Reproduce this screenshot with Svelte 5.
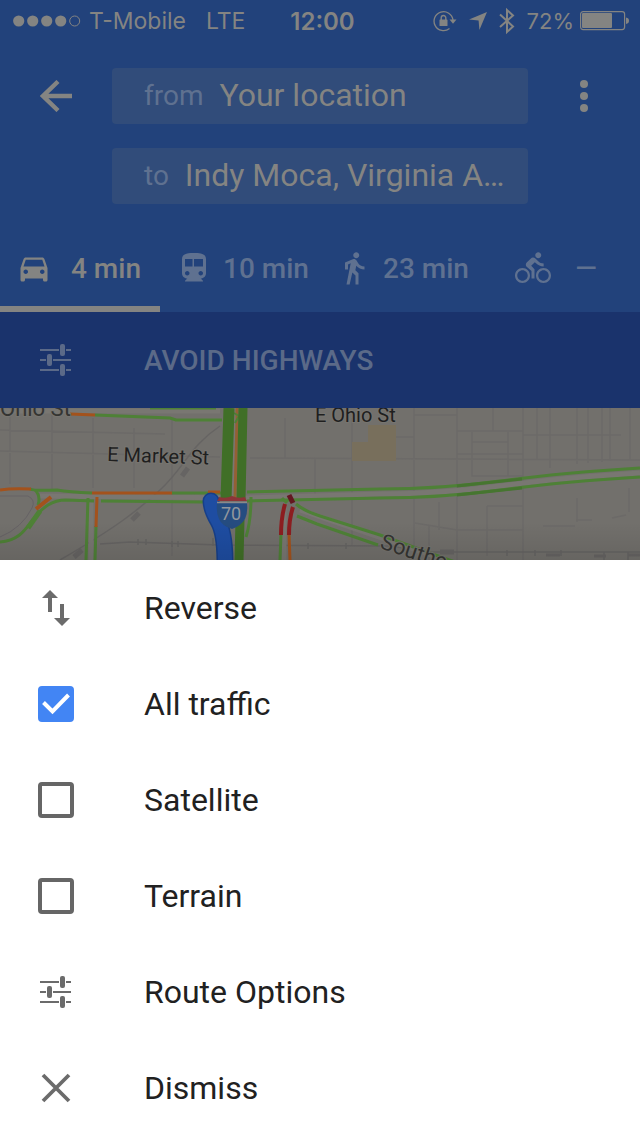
<script>
  let layers = $state([
    { id: 'traffic', label: 'All traffic', on: true },
    { id: 'satellite', label: 'Satellite', on: false },
    { id: 'terrain', label: 'Terrain', on: false }
  ]);

  const modes = [
    { icon: 'car', name: 'Driving', time: '4 min' },
    { icon: 'train', name: 'Transit', time: '10 min' },
    { icon: 'walk', name: 'Walking', time: '23 min' },
    { icon: 'bike', name: 'Cycling', time: '—' }
  ];
  let active = $state('car');

  const paths = {
    car: 'M18.92 6.01C18.72 5.42 18.16 5 17.5 5h-11c-.66 0-1.21.42-1.42 1.01L3 12v8c0 .55.45 1 1 1h1c.55 0 1-.45 1-1v-1h12v1c0 .55.45 1 1 1h1c.55 0 1-.45 1-1v-8l-2.08-5.99zM6.5 16c-.83 0-1.5-.67-1.5-1.5S5.67 13 6.5 13s1.5.67 1.5 1.5S7.33 16 6.5 16zm11 0c-.83 0-1.5-.67-1.5-1.5s.67-1.5 1.5-1.5 1.5.67 1.5 1.5-.67 1.5-1.5 1.5zM5 11l1.5-4.5h11L19 11H5z',
    train: 'M12 2c-4.42 0-8 .5-8 4v9.5C4 17.43 5.57 19 7.5 19L6 20.5v.5h12v-.5L16.5 19c1.93 0 3.5-1.57 3.5-3.5V6c0-3.5-3.58-4-8-4zM7.5 17c-.83 0-1.5-.67-1.5-1.5S6.67 14 7.5 14s1.5.67 1.5 1.5S8.33 17 7.5 17zm3.5-6H6V6h5v5zm1 0V6h6v5h-6zm4.5 6c-.83 0-1.5-.67-1.5-1.5s.67-1.5 1.5-1.5 1.5.67 1.5 1.5-.67 1.5-1.5 1.5z',
    walk: 'M13.5 5.5c1.1 0 2-.9 2-2s-.9-2-2-2-2 .9-2 2 .9 2 2 2zM9.8 8.9L7 23h2.1l1.8-8 2.1 2v6h2v-7.5l-2.1-2 .6-3C14.8 12 16.8 13 19 13v-2c-1.9 0-3.5-1-4.3-2.4l-1-1.6c-.4-.6-1-1-1.7-1-.3 0-.5.1-.8.1L6 8.3V13h2V9.6l1.8-.7',
    bike: 'M15.5 5.5c1.1 0 2-.9 2-2s-.9-2-2-2-2 .9-2 2 .9 2 2 2zM5 12c-2.8 0-5 2.2-5 5s2.2 5 5 5 5-2.2 5-5-2.2-5-5-5zm0 8.5c-1.9 0-3.5-1.6-3.5-3.5s1.6-3.5 3.5-3.5 3.5 1.6 3.5 3.5-1.6 3.5-3.5 3.5zm5.8-10l2.4-2.4.8.8c1.3 1.3 3 2.1 5.1 2.1V9c-1.5 0-2.7-.6-3.6-1.5l-1.9-1.9c-.5-.4-1-.6-1.6-.6s-1.1.2-1.4.6L7.8 8.4c-.4.4-.6.9-.6 1.4 0 .6.2 1.1.6 1.4L11 14v5h2v-6.2l-2.2-2.3zM19 12c-2.8 0-5 2.2-5 5s2.2 5 5 5 5-2.2 5-5-2.2-5-5-5zm0 8.5c-1.9 0-3.5-1.6-3.5-3.5s1.6-3.5 3.5-3.5 3.5 1.6 3.5 3.5-1.6 3.5-3.5 3.5z'
  };
</script>

{#snippet sliders()}
  <svg class="icon" viewBox="0 0 36 36" aria-hidden="true">
    <path d="M2 8h19M28 8h5M2 18h6M15 18h18M2 28h19M28 28h5" fill="none" stroke="currentColor" stroke-width="2" />
    <g fill="currentColor">
      <rect x="22" y="2" width="5" height="12" rx="2" />
      <rect x="9" y="12" width="5" height="12" rx="2" />
      <rect x="22" y="22" width="5" height="12" rx="2" />
    </g>
  </svg>
{/snippet}

<div class="screen">
  <header>
    <div class="status">
      <div class="side">
        <svg width="68" height="14" viewBox="0 0 68 14" aria-hidden="true">
          <g fill="currentColor">
            <circle cx="5.7" cy="7" r="5.6" /><circle cx="19.7" cy="7" r="5.6" />
            <circle cx="33.7" cy="7" r="5.6" /><circle cx="47.7" cy="7" r="5.6" />
          </g>
          <circle cx="61.7" cy="7" r="5" fill="none" stroke="currentColor" />
        </svg>
        <span>T-Mobile</span>
        <span class="network">LTE</span>
      </div>
      <span class="clock">12:00</span>
      <div class="side end">
        <svg width="24" height="22" viewBox="0 0 24 22" aria-hidden="true">
          <path d="M16.5 18.6A9.5 9.5 0 1 1 20 10" fill="none" stroke="currentColor" stroke-width="1.3" />
          <path d="M16.5 9.5h7L20 13.8z" fill="currentColor" />
          <rect x="6.5" y="9.5" width="8" height="6.5" rx=".6" fill="currentColor" />
          <path d="M8.2 10V7.8a2.3 2.3 0 0 1 4.6 0V10" fill="none" stroke="currentColor" stroke-width="1.4" />
        </svg>
        <svg width="18" height="18" viewBox="0 0 18 18" aria-hidden="true">
          <path d="M18 0L10.4 18 9.6 8.6 0 7.6z" fill="currentColor" />
        </svg>
        <svg width="16" height="28" viewBox="0 0 16 28" aria-hidden="true">
          <path d="M1 7.5l13 12L8 25V3l6 5.5L1 20" fill="none" stroke="currentColor" stroke-width="2" />
        </svg>
        <span class="charge">72%</span>
        <svg width="49" height="20" viewBox="0 0 49 20" aria-hidden="true">
          <rect x=".6" y=".6" width="44" height="18" rx="2.5" fill="none" stroke="currentColor" stroke-width="1.2" />
          <rect x="2" y="2" width="30" height="15" rx="1" fill="currentColor" />
          <path d="M46 6.5q3 .6 3 3.3t-3 3.3z" fill="currentColor" />
        </svg>
      </div>
    </div>

    <div class="route">
      <button class="tool" aria-label="Back">
        <svg width="32" height="32" viewBox="0 0 32 32"><path d="M32 16H4M18 1.5L3 16l15 14.5" fill="none" stroke="currentColor" stroke-width="4.4" /></svg>
      </button>
      <div class="fields">
        <div class="field">
          <label for="from">from</label>
          <input id="from" type="text" value="Your location" />
        </div>
        <div class="field">
          <label for="to">to</label>
          <input id="to" type="text" value="Indy Moca, Virginia A…" />
        </div>
      </div>
      <button class="tool" aria-label="More options">
        <svg width="8" height="32" viewBox="0 0 8 32"><g fill="currentColor"><circle cx="4" cy="4" r="4" /><circle cx="4" cy="16" r="4" /><circle cx="4" cy="28" r="4" /></g></svg>
      </button>
    </div>

    <nav class="modes">
      {#each modes as mode}
        <button class="mode" class:active={active === mode.icon} class:short={mode.icon === 'bike'} aria-label="{mode.name} {mode.time}" onclick={() => (active = mode.icon)}>
          <svg class="icon" viewBox="0 0 24 24" aria-hidden="true"><path d={paths[mode.icon]} fill="currentColor" /></svg>
          <span>{mode.time}</span>
        </button>
      {/each}
    </nav>
  </header>

  <button class="row filter">
    {@render sliders()}
    <span>AVOID HIGHWAYS</span>
  </button>

  <svg class="map" viewBox="0 0 640 152" preserveAspectRatio="xMidYMid slice" role="img" aria-label="Traffic map">
    <defs>
      <linearGradient id="shade" x1="0" y1="0" x2="0" y2="1">
        <stop offset=".75" stop-color="#000" stop-opacity="0" />
        <stop offset="1" stop-color="#000" stop-opacity=".1" />
      </linearGradient>
    </defs>
    <rect width="640" height="152" fill="#72706c" />
    <g fill="none" stroke="#6c6a68" stroke-width="1.5">
      <path d="M0 43l220 6M10 0v76M52 6v76M93 10v70M134 20v60M172 12v136M0 22l165 4M250 50l390 2M285 10v40M315 50v36M352 10v128M414 0v140M457 0v152M523 0v152M457 23h66M457 46h66M472 24v44h51M472 34h36v-10M508 34v34M493 0v23M523 27h98M537 0v52M550 0v60M577 0v56M588 0v55M602 0v54M610 0v53M630 0v52M414 7h43M396 29h18M487 98h36M487 98v50M439 94v28M415 115l42 7h66M543 118h32M576 112h16M629 80v24M612 110l14-3M429 118v34M577 90v24" />
    </g>
    <g fill="none" stroke="#666463" stroke-width="1.5">
      <path d="M220 18C190 38 184 60 160 82S115 120 60 152M100 136l30-2 90 3 170 1 40 6h210" />
      <path d="M138 131v6M146 131v6M172 133v6M178 133v6M213 130v8M308 135v6M346 135v6M507 142v6M535 142v6M561 142v6M604 144v8M628 144v8" />
      <path d="M182 68l6-8M132 112l7-7M74 149l8-7M440 144h14" stroke-width="5" />
      <path d="M546 147h14M594 148h12M628 147h12" stroke-width="3" />
    </g>
    <path d="M368 17h28v36h-44V34h16z" fill="#786f5c" />
    <path d="M0 88h28q8 4 4 12-10 20-32 29" fill="none" stroke="#666265" />

    <!-- road beds -->
    <g fill="none" stroke="#797772" stroke-width="5">
      <path d="M0 3h220M40 88l207 2 133-4q60 0 120-8t140-13M91 92v60M284 100v52M300 102l140 48" />
      <path d="M237 0l-3 90" stroke-width="8" />
    </g>

    <!-- free-flowing traffic -->
    <g fill="none" stroke="#4e8136" stroke-width="3">
      <path d="M95 7l75 3 6 2h46M150 0h66" />
      <path d="M30 81q4 2 27 1 12 2 35 3M172 85h50M247 84l133-3q60 0 120-8t140-13" />
      <path d="M0 134c28-2 28-25 48-37q8-5 18-5l28 1M101 93l102 1M247 93l133-3q60 0 120-8t140-13" />
      <path d="M35 82q6 6 3 15M88 90l-2 62M96 118l-1 34M251 89q0 24-5 40" />
      <path d="M281 126l-1 26M296 96q8 7 24 12l60 19 75 27M297 108l20 8 61 21M282 90l5 5" />
      <path d="M28 120l12-17" stroke-width="5" />
    </g>
    <g fill="none" stroke="#467530" stroke-width="3">
      <path d="M457 78q30-3 65-7M457 87q30-3 65-7" />
    </g>

    <!-- slow traffic -->
    <g fill="none" stroke="#a3521c" stroke-width="3">
      <path d="M70 6l25 1M0 82q12-2 31-1M92 85h80M97 89l-1 30M289 126l1 26M208 84h12" />
      <path d="M36 101l15-12" stroke-width="4" />
      <path d="M237 0v12l-2 78" stroke="#946034" />
    </g>
    <path d="M234 5l5 3-4 7" fill="none" stroke="#4e8136" stroke-width="2" />
    <g fill="none" stroke="#406f27">
      <path d="M229 0l-3 92" stroke-width="11" />
      <path d="M243 0l-2 92M240 112l-1 40" stroke-width="9" />
    </g>
    <g fill="none" stroke="#8c1d20" stroke-width="4">
      <path d="M285 96q-4 14-4 31M293 99q-4 12-4 28" />
      <path d="M289 87l4 8" stroke="#641720" stroke-width="5" />
    </g>

    <!-- selected route -->
    <path d="M211 93q0 8 7 20 7 12 7 42" fill="none" stroke="#173f88" stroke-width="17" stroke-linecap="round" />
    <path d="M211 93q0 8 7 20 7 12 7 42" fill="none" stroke="#1e4da2" stroke-width="14" stroke-linecap="round" />

    <path d="M217 95h30q1 10-2 16-4 7-13 10-10-3-13-10-3-6-2-16z" fill="#254c80" />
    <path d="M217 93q2-3 2-4 7 2 13-1 6 3 13 1 0 1 2 4z" fill="#8c3438" />
    <path d="M217 94.500h30" stroke="#8a8a8a" stroke-width="1.500" />
    <text x="231" y="112" text-anchor="middle" font-size="18" fill="#92979d">70</text>

    <g fill="#1f1f1f" font-size="20" stroke="#777570" stroke-width="2" paint-order="stroke">
      <text x="0" y="8" font-size="22" fill="#343432">Ohio St</text>
      <text x="315" y="14">E Ohio St</text>
      <text x="107" y="53" transform="rotate(2 107 53)">E Market St</text>
      <text x="379" y="140" transform="rotate(18 379 140)" font-size="22" fill="#343432">Southe</text>
    </g>
    <rect width="640" height="152" fill="url(#shade)" />
  </svg>

  <section class="sheet" aria-label="Map options">
    <button class="row">
      <svg class="icon" viewBox="0 0 36 36" aria-hidden="true">
        <path d="M12 0l8 8h-6v14h-4V8H4zM24 36l-8-8h6V14h4v14h6z" fill="currentColor" />
      </svg>
      <span>Reverse</span>
    </button>
    {#each layers as layer}
      <label class="row" for={layer.id}>
        <span class="box">
          <input id={layer.id} type="checkbox" bind:checked={layer.on} />
          {#if layer.on}
            <svg class="icon" viewBox="0 0 36 36" aria-hidden="true"><path d="M5.500 16.500l9 9L30.500 9" fill="none" stroke="#fff" stroke-width="4" /></svg>
          {/if}
        </span>
        <span>{layer.label}</span>
      </label>
    {/each}
    <button class="row">
      {@render sliders()}
      <span>Route Options</span>
    </button>
    <button class="row">
      <svg class="icon" viewBox="0 0 36 36" aria-hidden="true">
        <path d="M5 5l26 26M31 5L5 31" fill="none" stroke="currentColor" stroke-width="3.8" />
      </svg>
      <span>Dismiss</span>
    </button>
  </section>
</div>

<style>
  :global(body) {
    margin: 0;
    background: #fff;
  }

  .screen {
    display: flex;
    flex-direction: column;
    min-height: 100vh;
    font-family: Roboto, 'Noto Sans', sans-serif;
    color: #848482;
  }

  button {
    margin: 0;
    padding: 0;
    border: 0;
    background: none;
    color: inherit;
    font: inherit;
    text-align: left;
    cursor: pointer;
  }

  svg {
    display: block;
    flex: none;
  }

  .icon {
    width: 36px;
    height: 36px;
  }

  header {
    background: #22427b;
  }

  .status {
    display: grid;
    grid-template-columns: 1fr auto 1fr;
    align-items: center;
    height: 42px;
    padding: 0 11px 0 13px;
    font-family: Inter, 'Liberation Sans', sans-serif;
    font-size: 23px;
  }

  .side {
    display: flex;
    align-items: center;
    gap: 8px;
    white-space: nowrap;
  }

  .network {
    margin-left: 12px;
  }

  .end {
    justify-content: flex-end;
    gap: 12px;
  }

  .charge {
    margin-right: -6px;
    font-size: 22px;
  }

  .clock {
    padding-left: 3px;
    font-size: 24px;
    font-weight: 600;
  }

  .route {
    display: grid;
    grid-template-columns: 112px minmax(0, 1fr) 112px;
    align-items: start;
    padding: 26px 0 20px;
  }

  .tool {
    display: grid;
    place-items: center;
    height: 56px;
  }

  .fields {
    display: grid;
    grid-template-columns: minmax(0, 1fr);
    gap: 24px;
  }

  .field {
    display: flex;
    align-items: center;
    gap: 16px;
    box-sizing: border-box;
    height: 56px;
    padding: 0 16px 2px 32px;
    border-radius: 4px;
    background: #314c7a;
  }

  .field label {
    color: #5f7190;
    font-size: 28px;
  }

  .field input {
    flex: 1;
    min-width: 0;
    padding: 0;
    border: 0;
    outline: 0;
    background: none;
    color: inherit;
    font: inherit;
    font-size: 32px;
    text-overflow: ellipsis;
  }

  .modes {
    display: grid;
    grid-template-columns: repeat(4, 1fr);
    height: 88px;
  }

  .mode {
    display: flex;
    align-items: center;
    padding: 6px 0 0 16px;
    border-bottom: 6px solid transparent;
    color: #5f7190;
    font-size: 28px;
    font-weight: 500;
  }

  .mode span {
    flex: 1;
    text-align: center;
  }

  .mode.short {
    padding-right: 19px;
    padding-left: 35px;
  }

  .mode.active {
    border-bottom-color: #848482;
    color: #848482;
  }

  .row {
    display: grid;
    grid-template-columns: 36px 1fr;
    column-gap: 70px;
    align-items: center;
    height: 96px;
    padding: 0 38px;
    cursor: pointer;
  }

  .row.filter {
    background: #1a336c;
    color: #5b6a88;
    font-size: 28px;
    font-weight: 500;
  }

  .map {
    width: 100%;
    height: 152px;
  }

  .sheet {
    display: flex;
    flex: 1;
    flex-direction: column;
    background: #fff;
    color: #6b6b6b;
    font-size: 32px;
  }

  .sheet .row > span:last-child {
    color: #212121;
  }

  .box {
    display: grid;
  }

  .box > * {
    grid-area: 1 / 1;
  }

  .box svg {
    pointer-events: none;
  }

  .box input {
    appearance: none;
    box-sizing: border-box;
    width: 36px;
    height: 36px;
    margin: 0;
    border: 4px solid #666;
    border-radius: 4px;
  }

  .box input:checked {
    border-color: #4285f4;
    background: #4285f4;
  }
</style>
